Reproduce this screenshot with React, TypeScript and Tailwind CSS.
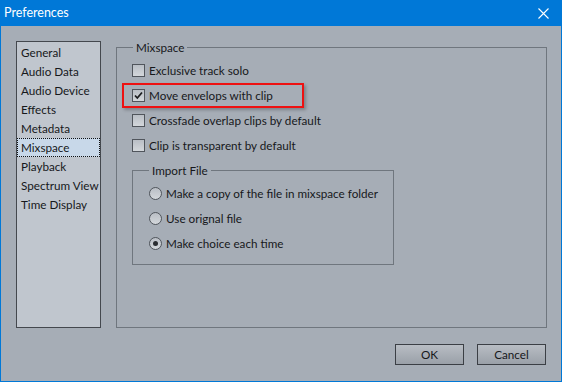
import React from 'react';

const font = { fontFamily: 'Lato, "Liberation Sans", sans-serif' };

const pages = ['General', 'Audio Data', 'Audio Device', 'Effects', 'Metadata', 'Mixspace', 'Playback', 'Spectrum View', 'Time Display'];

function CheckBox({ checked }: { checked?: boolean }) {
    return (
        <span className="w-[13px] h-[13px] border border-[#50555c] bg-gradient-to-b from-[#b9bec5] to-[#d3d7db] flex items-center justify-center shrink-0">
            {checked && (
                <svg width="11" height="11" viewBox="0 0 11 11">
                    <path d="M2 5.5 L4.3 8 L9 2.5" fill="none" stroke="#1b1d20" strokeWidth="1.8" />
                </svg>
            )}
        </span>
    );
}

function Radio({ checked }: { checked?: boolean }) {
    return (
        <span className="w-[13px] h-[13px] rounded-full border border-[#50555c] bg-gradient-to-b from-[#b9bec5] to-[#d3d7db] flex items-center justify-center shrink-0">
            {checked && <span className="w-[5px] h-[5px] rounded-full bg-[#2a2d31]" />}
        </span>
    );
}

export default function App() {
    return (
        <div className="w-[562px] h-[382px] bg-[#0078d7] flex flex-col text-[11.7px] text-[#16181b] whitespace-nowrap" style={font}>
            <div className="h-[26px] flex items-center justify-between pl-[4px] pr-[13px] text-white shrink-0">
                <span className="text-[12.5px]">Preferences</span>
                <svg width="11" height="11" viewBox="0 0 11 11">
                    <path d="M0.5 0.5 L10.5 10.5 M10.5 0.5 L0.5 10.5" stroke="#fff" strokeWidth="1.1" />
                </svg>
            </div>

            <div className="flex-1 mx-[1px] mb-[1px] bg-[#a6adb6] flex flex-col">
                <div className="flex gap-[15px] pl-[15px] pr-[14px] pt-[15px] h-[302px]">
                    {/* page list */}
                    <div className="w-[85px] h-[287px] border border-[#44484e] bg-[#c0c6ce] pt-[1px] flex flex-col">
                        {pages.map((p) => (
                            <div
                                key={p}
                                className={
                                    p === 'Mixspace'
                                        ? 'h-[19px] flex items-center pl-[3px] bg-[#c8d8e9] border border-dotted border-[#111]'
                                        : 'h-[19px] flex items-center pl-[4px]'
                                }
                            >
                                {p}
                            </div>
                        ))}
                    </div>

                    {/* Mixspace group */}
                    <div className="flex-1 flex flex-col pt-[6px]">
                        <div className="relative flex-1 border border-[#6f767e] pl-[15px] pt-[10px]">
                            <span className="absolute -top-[9px] left-[16px] px-[3px] bg-[#a6adb6]">Mixspace</span>

                            <div className="flex flex-col">
                                <div className="h-[25px] flex items-center gap-[4px]">
                                    <CheckBox />
                                    <span>Exclusive track solo</span>
                                </div>
                                <div className="h-[25px] flex items-center gap-[4px] -ml-[10px] pl-[8px] w-[182px] border-2 border-[#ee1111] shadow-[2px_2px_3px_rgba(0,0,0,0.25)]">
                                    <CheckBox checked />
                                    <span>Move envelops with clip</span>
                                </div>
                                <div className="h-[25px] flex items-center gap-[4px]">
                                    <CheckBox />
                                    <span>Crossfade overlap clips by default</span>
                                </div>
                                <div className="h-[25px] flex items-center gap-[4px]">
                                    <CheckBox />
                                    <span>Clip is transparent by default</span>
                                </div>
                            </div>

                            {/* Import File group */}
                            <div className="relative mt-[12px] w-[262px] h-[95px] border border-[#6f767e] pl-[16px] pt-[10px] flex flex-col">
                                <span className="absolute -top-[9px] left-[16px] px-[3px] bg-[#a6adb6]">Import File</span>
                                <div className="h-[25px] flex items-center gap-[4px]">
                                    <Radio />
                                    <span>Make a copy of the file in mixspace folder</span>
                                </div>
                                <div className="h-[25px] flex items-center gap-[4px]">
                                    <Radio />
                                    <span>Use orignal file</span>
                                </div>
                                <div className="h-[25px] flex items-center gap-[4px]">
                                    <Radio checked />
                                    <span>Make choice each time</span>
                                </div>
                            </div>
                        </div>
                    </div>
                </div>

                <div className="flex justify-end gap-[13px] pr-[15px] pt-[16px]">
                    <button className="w-[69px] h-[21px] border border-[#3b3f45] bg-gradient-to-b from-[#b8bdc4] to-[#9aa0a8]">OK</button>
                    <button className="w-[69px] h-[21px] border border-[#3b3f45] bg-gradient-to-b from-[#b8bdc4] to-[#9aa0a8]">Cancel</button>
                </div>
            </div>
        </div>
    );
}
